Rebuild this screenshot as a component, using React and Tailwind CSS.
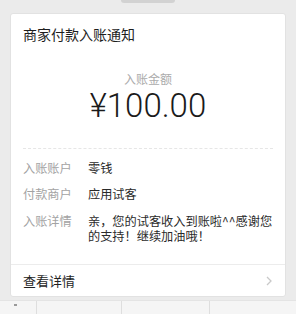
import React from "react";

const cjk = { fontFamily: '"Noto Sans CJK SC", "Noto Sans", sans-serif' };

function Row({ label, children, className = "" }) {
  return (
    <div className={`flex ${className}`}>
      <div className="w-[65px] shrink-0 text-[#a3a3a3]">{label}</div>
      <div className="flex-1 text-[#2a2a2a]">{children}</div>
    </div>
  );
}

export default function App() {
  return (
    <div
      className="w-[296px] h-[314px] bg-[#ebebeb] overflow-hidden flex flex-col"
      style={cjk}
    >
      <div className="h-[3px] flex justify-center">
        <div className="w-[54px] h-[3px] rounded-b-[3px] bg-[#d2d2d2]" />
      </div>
      <div className="mx-[10px] mt-[10px] h-[284px] bg-white rounded-[3px] border border-[#e2e2e2] flex flex-col">
        <div className="px-[12px] pt-[10px] text-[14px] leading-[20px] text-[#1e1e1e]">
          商家付款入账通知
        </div>
        <div className="mt-[27px] text-center text-[12px] leading-[16px] text-[#ababab]">
          入账金额
        </div>
        <div
          className="mt-[1px] text-center text-[33px] leading-[36px] font-light text-[#1a1a1a]"
          style={{ fontFamily: 'Roboto, "Liberation Sans", sans-serif' }}
        >
          ¥100.00
        </div>
        <div className="mx-[12px] mt-[24px] border-t border-dashed border-[#e6e6e6]" />
        <div className="pl-[12px] pr-[12px] mt-[12px] flex flex-col gap-[11px] text-[12.2px] leading-[15px]">
          <Row label="入账账户">零钱</Row>
          <Row label="付款商户">应用试客</Row>
          <Row label="入账详情" className="mt-[1px]">
            亲，您的试客收入到账啦^^感谢您的支持！继续加油哦！
          </Row>
        </div>
        <div className="mt-auto border-t border-[#ececec] h-[32px] flex items-center justify-between pl-[12px] pr-[13px]">
          <span className="text-[13px] text-[#1e1e1e]">查看详情</span>
          <svg width="6" height="10" viewBox="0 0 6 10" fill="none">
            <polyline points="1,1 5,5 1,9" stroke="#c9c9c9" strokeWidth="1.3" />
          </svg>
        </div>
      </div>
      <div className="mt-[3px] flex-1 bg-[#f5f5f5] border-t border-[#e4e4e4] flex">
        <div className="w-[37px] border-r border-[#dedede] relative">
          <div className="absolute left-[14px] top-[3px] w-[3px] h-[2px] bg-[#9a9a9a]" />
        </div>
        <div className="w-[85px] border-r border-[#dedede]" />
        <div className="w-[88px] border-r border-[#dedede]" />
        <div className="flex-1" />
      </div>
    </div>
  );
}
